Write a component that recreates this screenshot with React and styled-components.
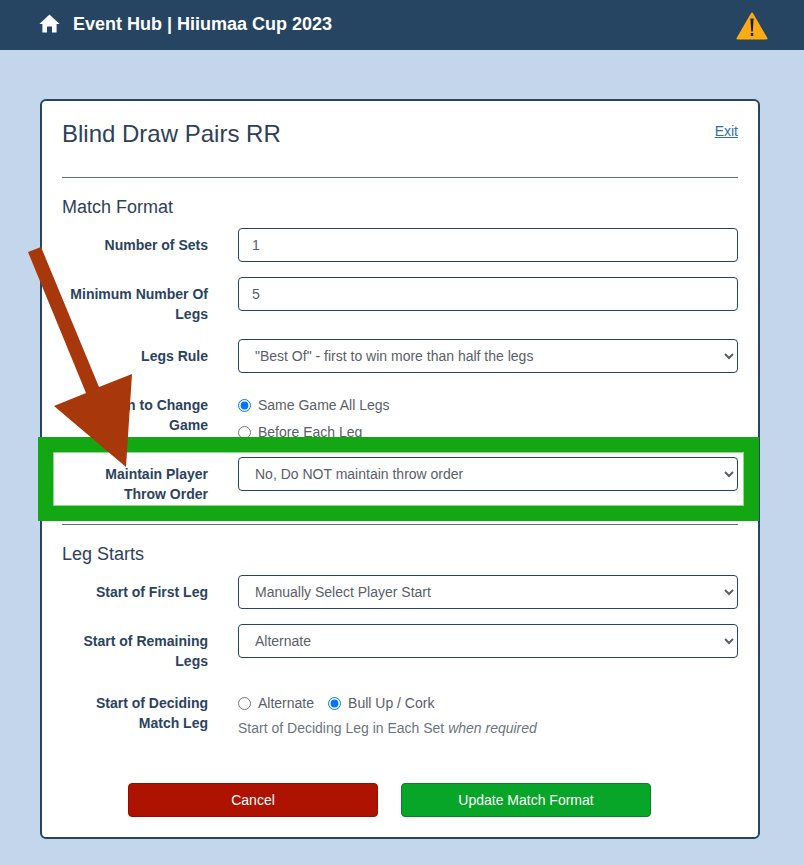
import React from 'react';
import styled, { createGlobalStyle } from 'styled-components';

const navy = '#264563';

const GlobalStyle = createGlobalStyle`
	html, body {
		margin: 0;
		padding: 0;
		background: #c3d6ec;
		font-family: "Liberation Sans", Arial, sans-serif;
		overflow: hidden;
	}
`;

const Page = styled.div`
	position: relative;
	width: 804px;
	height: 865px;
	overflow: hidden;
`;

const Header = styled.header`
	height: 50px;
	background: ${navy};
	display: flex;
	align-items: center;
	justify-content: space-between;
	padding: 0 36px 0 39px;
	box-sizing: border-box;
`;

const Brand = styled.div`
	display: flex;
	align-items: center;
	gap: 13px;
	margin-bottom: 2px;
	color: #ffffff;
	font-size: 18px;
	font-weight: 700;
`;

const HomeSvg = styled.svg`
	margin-bottom: 1px;
`;

const WarningSvg = styled.svg`
	margin-top: 1px;
`;

const Card = styled.main`
	box-sizing: border-box;
	width: 720px;
	height: 740px;
	margin: 49px 0 0 40px;
	padding: 20px;
	background: #ffffff;
	border: 2px solid ${navy};
	border-radius: 6px;
`;

const TitleRow = styled.div`
	display: flex;
	justify-content: space-between;
	align-items: flex-start;
	height: 56px;
`;

const Title = styled.h1`
	margin: -1px 0 0;
	font-size: 24px;
	line-height: 28px;
	font-weight: 400;
	color: #2f4159;
`;

const ExitLink = styled.a`
	font-size: 14px;
	line-height: 20px;
	color: #2f72a8;
	text-decoration: underline;
`;

const Rule = styled.hr`
	margin: 0;
	border: 0;
	border-top: 1px solid #5d7184;
`;

const SectionTitle = styled.h2`
	margin: 19px 0 11px;
	font-size: 18px;
	line-height: 20px;
	font-weight: 400;
	color: #2f4159;
`;

const Row = styled.div`
	display: grid;
	grid-template-columns: 146px 500px;
	column-gap: 30px;
	margin-bottom: ${props => props.$gap ?? 15}px;
`;

const Label = styled.label`
	padding-top: 7px;
	text-align: right;
	font-size: 14px;
	line-height: 20px;
	font-weight: 700;
	color: #2b4360;
`;

const fieldStyles = `
	box-sizing: border-box;
	width: 500px;
	height: 34px;
	background: #ffffff;
	border: 1px solid ${navy};
	border-radius: 4px;
	font-family: "Liberation Sans", Arial, sans-serif;
	font-size: 14px;
	color: #5a6068;
	outline: none;
`;

const TextInput = styled.input`
	${fieldStyles}
	padding: 0 13px;
`;

const Select = styled.select`
	${fieldStyles}
	padding: 0 12px;
`;

const RadioStack = styled.div`
	display: flex;
	flex-direction: column;
	gap: 7px;
	padding-top: 7px;
	height: 62px;
`;

const RadioLine = styled.div`
	display: flex;
	align-items: center;
	gap: 14px;
	padding-top: 7px;
`;

const RadioOption = styled.label`
	display: flex;
	align-items: center;
	gap: 7px;
	height: 20px;
	font-size: 14px;
	color: #5a6068;
`;

const Radio = styled.input`
	margin: 0;
	width: 13px;
	height: 13px;
`;

const Hint = styled.p`
	margin: 5px 0 0;
	font-size: 14px;
	line-height: 20px;
	color: #6c757d;
`;

const Actions = styled.div`
	display: flex;
	gap: 23px;
	margin: 45px 0 0 66px;
`;

const ActionButton = styled.button`
	width: 250px;
	height: 34px;
	padding: 0;
	border: 1px solid ${props => props.$edge};
	border-radius: 4px;
	background: ${props => props.$fill};
	color: #ffffff;
	font-family: "Liberation Sans", Arial, sans-serif;
	font-size: 14px;
`;

const HighlightBox = styled.div`
	position: absolute;
	left: 38px;
	top: 437px;
	width: 721px;
	height: 84px;
	box-sizing: border-box;
	border: 15px solid #13a813;
	box-shadow: inset 0 0 0 1px #8fd98f;
	pointer-events: none;
`;

const ArrowOverlay = styled.svg`
	position: absolute;
	left: 0;
	top: 0;
	pointer-events: none;
`;

const HomeIcon = () => (
	<HomeSvg width="21" height="19" viewBox="0 0 21 19" aria-hidden="true">
		<path fill="#ffffff" d="M10.5 0.5 L20.6 10 L17.6 10 L17.6 18.5 L13 18.5 L13 12.4 L8 12.4 L8 18.5 L3.4 18.5 L3.4 10 L0.4 10 Z" />
	</HomeSvg>
);

const WarningIcon = () => (
	<WarningSvg width="32" height="28" viewBox="0 0 32 28" aria-hidden="true">
		<path fill="#fcab14" stroke="#fcab14" strokeWidth="2" strokeLinejoin="round" d="M16 1.5 L30.5 26.5 L1.5 26.5 Z" />
		<path fill="#1d1a12" d="M14.4 6.5 H17.6 L16.8 19.5 H15.2 Z" />
		<rect x="14.8" y="21" width="2.4" height="3" fill="#1d1a12" />
	</WarningSvg>
);

export default function App() {
	return (
		<Page>
			<GlobalStyle />
			<Header>
				<Brand>
					<HomeIcon />
					<span>Event Hub | Hiiumaa Cup 2023</span>
				</Brand>
				<WarningIcon />
			</Header>
			<Card>
				<TitleRow>
					<Title>Blind Draw Pairs RR</Title>
					<ExitLink href="#">Exit</ExitLink>
				</TitleRow>
				<Rule />
				<SectionTitle>Match Format</SectionTitle>
				<Row>
					<Label>Number of Sets</Label>
					<TextInput defaultValue="1" />
				</Row>
				<Row>
					<Label>Minimum Number Of Legs</Label>
					<TextInput defaultValue="5" />
				</Row>
				<Row>
					<Label>Legs Rule</Label>
					<Select defaultValue="best">
						<option value="best">"Best Of" - first to win more than half the legs</option>
					</Select>
				</Row>
				<Row $gap={0}>
					<Label>When to Change Game</Label>
					<RadioStack>
						<RadioOption><Radio type="radio" name="change" defaultChecked />Same Game All Legs</RadioOption>
						<RadioOption><Radio type="radio" name="change" />Before Each Leg</RadioOption>
					</RadioStack>
				</Row>
				<Row $gap={20}>
					<Label>Maintain Player Throw Order</Label>
					<Select defaultValue="no">
						<option value="no">No, Do NOT maintain throw order</option>
					</Select>
				</Row>
				<Rule />
				<SectionTitle>Leg Starts</SectionTitle>
				<Row>
					<Label>Start of First Leg</Label>
					<Select defaultValue="manual">
						<option value="manual">Manually Select Player Start</option>
					</Select>
				</Row>
				<Row>
					<Label>Start of Remaining Legs</Label>
					<Select defaultValue="alternate">
						<option value="alternate">Alternate</option>
					</Select>
				</Row>
				<Row $gap={0}>
					<Label>Start of Deciding Match Leg</Label>
					<div>
						<RadioLine>
							<RadioOption><Radio type="radio" name="decider" />Alternate</RadioOption>
							<RadioOption><Radio type="radio" name="decider" defaultChecked />Bull Up / Cork</RadioOption>
						</RadioLine>
						<Hint>Start of Deciding Leg in Each Set <em>when required</em></Hint>
					</div>
				</Row>
				<Actions>
					<ActionButton $fill="#ae1200" $edge="#8f1000">Cancel</ActionButton>
					<ActionButton $fill="#07a528" $edge="#0a7f24">Update Match Format</ActionButton>
				</Actions>
			</Card>
			<HighlightBox />
			<ArrowOverlay width="804" height="865" viewBox="0 0 804 865" aria-hidden="true">
				<path fill="#a8380c" d="M28 252 L41 247 L99 387 L132 374 L126 467 L54 406 L86 393 Z" />
			</ArrowOverlay>
		</Page>
	);
}
